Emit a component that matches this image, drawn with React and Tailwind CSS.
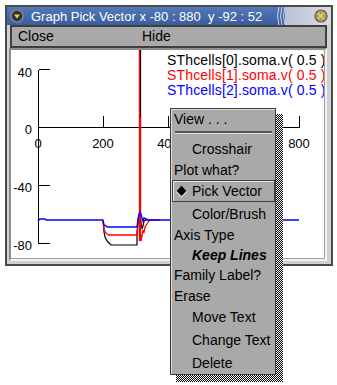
import React from "react";

const BLUE = "38,221 40,219 45,219 46,220 103,220 104,225 106,226 107,227 137,227 138,219 139,214 140,212 141,214 142,218 143,221 144,218 146,219 148,220 299,220";
const RED = "103,221 104,228 105,232 107,234 109,235 137,235 138,226 139,214 141,241 142,236 143,230 144,233 145,227 147,224 149,221 151,220 160,220";
const BLACK = "103,221 104,232 105,237 107,241 109,243 111,245 137,245 137,232 138,222 139,216 140,214 141,222 142,229 143,226 144,221 146,220 150,220";

function Plot() {
  return (
    <svg width="313" height="208" viewBox="11 50 313 208" className="block">
      <g stroke="#000" strokeWidth="1" shapeRendering="crispEdges" fill="none">
        <line x1="38.5" y1="69.5" x2="38.5" y2="243.5" />
        <line x1="38.5" y1="69.5" x2="50" y2="69.5" />
        <line x1="38.5" y1="185.5" x2="50" y2="185.5" />
        <line x1="38.5" y1="243.5" x2="50" y2="243.5" />
        <line x1="38" y1="127.5" x2="299.5" y2="127.5" />
        <line x1="103.5" y1="116" x2="103.5" y2="127.5" />
        <line x1="168.5" y1="116" x2="168.5" y2="127.5" />
        <line x1="233.5" y1="116" x2="233.5" y2="127.5" />
        <line x1="299.5" y1="116" x2="299.5" y2="127.5" />
      </g>
      <g fontFamily="'Liberation Sans', Arial, sans-serif" fontSize="13" fill="#000">
        <text x="32" y="77" textAnchor="end">40</text>
        <text x="32" y="134" textAnchor="end">0</text>
        <text x="32" y="192" textAnchor="end">-40</text>
        <text x="32" y="250" textAnchor="end">-80</text>
        <text x="38" y="148" textAnchor="middle">0</text>
        <text x="103" y="148" textAnchor="middle">200</text>
        <text x="168" y="148" textAnchor="middle">400</text>
        <text x="299" y="148" textAnchor="middle">800</text>
      </g>
      <polyline points={BLACK} fill="none" stroke="#000" strokeWidth="1.2" />
      <polyline points={RED} fill="none" stroke="#f00" strokeWidth="1.3" />
      <line x1="140" y1="50" x2="140" y2="241" stroke="#f00" strokeWidth="2.4" />
      <line x1="140.5" y1="50" x2="140.5" y2="117" stroke="#000" strokeWidth="1" shapeRendering="crispEdges" />
      <polyline points={BLUE} fill="none" stroke="#00f" strokeWidth="1.4" />
      <g fontFamily="'Liberation Sans', Arial, sans-serif" fontSize="14" letterSpacing="0.15">
        <text x="167" y="65" fill="#000">SThcells[0].soma.v( 0.5 )</text>
        <text x="167" y="80" fill="#f00">SThcells[1].soma.v( 0.5 )</text>
        <text x="167" y="95" fill="#00f">SThcells[2].soma.v( 0.5 )</text>
      </g>
    </svg>
  );
}

function MenuIcon() {
  return (
    <svg width="14" height="14" viewBox="0 0 14 14">
      <circle cx="7" cy="7" r="6" fill="#2b3346" stroke="#8a93a8" strokeWidth="1.2" />
      <polygon points="4,5.5 10,5.5 7,9.5" fill="#f2d400" />
    </svg>
  );
}

function CloseIcon() {
  return (
    <svg width="14" height="14" viewBox="0 0 14 14">
      <circle cx="7" cy="7" r="6" fill="#9a9a9a" stroke="#5e5e5e" strokeWidth="1.2" />
      <path d="M4.6 4.6 L9.4 9.4 M9.4 4.6 L4.6 9.4" stroke="#f2d400" strokeWidth="2" strokeLinecap="round" />
    </svg>
  );
}

function Arcs() {
  return (
    <svg width="10" height="18" viewBox="0 0 10 18">
      <path d="M4 0 Q1 9 4 18" stroke="#c9d6ee" strokeWidth="1" fill="none" />
      <path d="M7 0 Q4 9 7 18" stroke="#c9d6ee" strokeWidth="1" fill="none" />
      <path d="M10 0 Q7 9 10 18" stroke="#c9d6ee" strokeWidth="1" fill="none" />
    </svg>
  );
}

function Diamond() {
  return (
    <svg width="13" height="13" viewBox="0 0 13 13">
      <polygon points="6.5,0.5 12.5,6.5 6.5,12.5 0.5,6.5" fill="#e8e8e8" />
      <polygon points="6.5,0.5 11.5,6 6.5,11 1.5,6" fill="#000" />
    </svg>
  );
}

function Item({ children, h, indent, bold }) {
  return (
    <div
      className={`flex items-center whitespace-nowrap text-[14px] text-black ${indent ? "pl-[21px]" : "pl-[3px]"} ${bold ? "font-bold italic" : ""}`}
      style={{ height: h }}
    >
      {children}
    </div>
  );
}

export default function App() {
  return (
    <div className="relative w-[337px] h-[385px] overflow-hidden bg-white pl-[5px] pt-[5px] font-['Liberation_Sans',Arial,sans-serif]">
      <div className="w-[328px] h-[261px] border-2 border-[#4a4a4a] bg-[#d0d0d0] flex flex-col">
        <div className="h-[18px] flex items-center bg-[linear-gradient(to_bottom,#5479b8,#3a5d9d)]">
          <div className="ml-[3px]"><MenuIcon /></div>
          <div className="ml-[7px] text-[13px] text-white whitespace-pre leading-none">Graph Pick Vector x -80 : 880  y -92 : 52</div>
          <div className="flex-1" />
          <Arcs />
          <div className="w-[46px] h-full flex items-center justify-end pr-[3px] bg-[linear-gradient(to_right,#b7c3d8,#dcdcdc)]">
            <CloseIcon />
          </div>
        </div>
        <div className="ml-[3px] mr-[4px] h-[23px] border-2 border-[#3f3f3f] bg-[#a9a9a9] flex items-center text-[14px] text-black">
          <div className="w-[130px] pl-[6px]">Close</div>
          <div>Hide</div>
        </div>
        <div className="ml-[2px] w-[318px] border-2 border-t-[#8e8e8e] border-l-[#8e8e8e] border-r-[#f2f2f2] border-b-[#f2f2f2]">
          <div className="w-[314px] h-[209px] bg-white border-r border-b border-[#a0a0a0] overflow-hidden">
            <Plot />
          </div>
        </div>
      </div>

      <div className="absolute left-[176px] top-[114px] w-[107px] h-[268px] bg-[repeating-conic-gradient(#000_0%_25%,#fff_0%_50%)] bg-[length:2px_2px]" />
      <div className="absolute left-[170px] top-[108px] w-[106px] h-[267px] bg-[#a9a9a9] border border-[#3a3a3a] shadow-[inset_1px_1px_0_#dcdcdc]">
        <Item h={21}>View . . .</Item>
        <div className="h-[8px] pt-[1px] pl-[4px] pr-[3px]">
          <div className="h-[3px] border-t-2 border-[#555] bg-[#e6e6e6]" />
        </div>
        <Item h={22} indent>Crosshair</Item>
        <Item h={20}>Plot what?</Item>
        <div className="ml-[1px] w-[103px] h-[22px] border border-[#404040] shadow-[inset_1px_1px_0_#e8e8e8] flex items-center pl-[2px] text-[14px] text-black whitespace-nowrap">
          <Diamond />
          <span className="ml-[4px]">Pick Vector</span>
        </div>
        <Item h={24} indent>Color/Brush</Item>
        <Item h={19}>Axis Type</Item>
        <Item h={20} indent bold>Keep Lines</Item>
        <Item h={21}>Family Label?</Item>
        <Item h={20}>Erase</Item>
        <Item h={23} indent>Move Text</Item>
        <Item h={23} indent>Change Text</Item>
        <Item h={22} indent>Delete</Item>
      </div>
    </div>
  );
}
